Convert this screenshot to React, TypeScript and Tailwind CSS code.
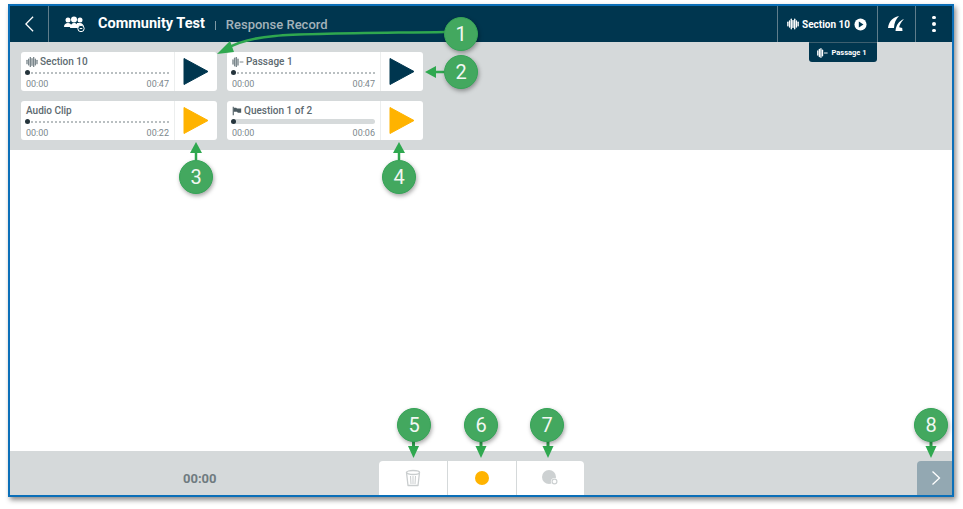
import React from "react";

const font = { fontFamily: "Roboto, 'Liberation Sans', sans-serif" };

function Wave({ className = "", color = "currentColor" }: { className?: string; color?: string }) {
  const bars = [[1, 3.5], [3, 2], [5, 0], [7, 1.5], [9, 0], [11, 2], [13, 3.5]];
  return (
    <svg viewBox="0 0 14 12" className={className}>
      {bars.map(([x, y]) => (
        <line key={x} x1={x} x2={x} y1={y + 0.5} y2={11.5 - y} stroke={color} strokeWidth="1.6" strokeLinecap="round" />
      ))}
    </svg>
  );
}

function PassageIcon({ className = "", color = "currentColor" }: { className?: string; color?: string }) {
  return (
    <svg viewBox="0 0 14 12" className={className}>
      {[[1, 3], [3, 1], [5, 0], [7, 2]].map(([x, y]) => (
        <line key={x} x1={x} x2={x} y1={y + 0.5} y2={11.5 - y} stroke={color} strokeWidth="1.7" strokeLinecap="round" />
      ))}
      <line x1="9" x2="13.5" y1="6" y2="6" stroke={color} strokeWidth="1.2" />
    </svg>
  );
}

function Flag({ className = "" }: { className?: string }) {
  return (
    <svg viewBox="0 0 12 12" className={className}>
      <path d="M1.5 1v10" stroke="#4b5a60" strokeWidth="1.3" />
      <path d="M2 2h3l1 1h5v5H7L6 7H2z" fill="#4b5a60" />
    </svg>
  );
}

function Tri({ color }: { color: string }) {
  return (
    <svg viewBox="0 0 26 29" className="w-[26px] h-[29px]">
      <path d="M1 1.5 25 14.5 1 27.5z" fill={color} stroke={color} strokeWidth="1" strokeLinejoin="round" />
    </svg>
  );
}

function Card({
  icon,
  title,
  end,
  solid,
  color,
}: {
  icon?: React.ReactNode;
  title: string;
  end: string;
  solid?: boolean;
  color: string;
}) {
  return (
    <div className="w-[196px] h-[39px] bg-white rounded-[3px] flex">
      <div className="w-[154px] pl-[5px] pr-[5px] pt-[3px] border-r border-[#eceeee]">
        <div className="flex items-center gap-[2px] h-[13px] text-[10px] font-medium text-[#5d6a70] leading-none">
          {icon}
          <span>{title}</span>
        </div>
        <div className="relative mt-[3px] h-[3px] flex items-center">
          {solid ? (
            <div className="w-full h-[5px] rounded-full bg-[#d6dadb]" />
          ) : (
            <div className="w-full h-[2px] border-t-2 border-dotted border-[#b9bfc1]" />
          )}
          <div className="absolute left-[-1px] top-[-1px] w-[5px] h-[5px] rounded-full bg-[#25343c]" />
        </div>
        <div className="flex justify-between mt-[5px] text-[9px] leading-[11px] text-[#7c888d]">
          <span>00:00</span>
          <span>{end}</span>
        </div>
      </div>
      <div className="flex-1 flex items-center justify-center pr-[1px]">
        <Tri color={color} />
      </div>
    </div>
  );
}

function Badge({ n, x, y }: { n: number; x: number; y: number }) {
  return (
    <div
      className="absolute w-[34px] h-[34px] rounded-full bg-[#43a85f] border border-[#35a457] shadow-[1px_2px_4px_rgba(0,0,0,0.35)] flex items-center justify-center text-[#f2f7f3] text-[20px] leading-none"
      style={{ left: x - 17, top: y - 17 }}
    >
      {n}
    </div>
  );
}

function Arrows() {
  const g = "#2fa84f";
  return (
    <svg className="absolute left-0 top-0 w-[963px] h-[509px] pointer-events-none" viewBox="0 0 963 509">
      <path d="M445 32C380 33 310 33 275 36 250 38 236 43 226 49" fill="none" stroke={g} strokeWidth="2.5" />
      <path d="M217 54 230 41 234 52z" fill={g} />
      <path d="M444 72H432" stroke={g} strokeWidth="2.5" />
      <path d="M425 72 436 66V78z" fill={g} />
      <path d="M196 160V150" stroke={g} strokeWidth="2.5" />
      <path d="M196 142 190 153H202z" fill={g} />
      <path d="M399 160V150" stroke={g} strokeWidth="2.5" />
      <path d="M399 142 393 153H405z" fill={g} />
      {[413.5, 481, 548, 931].map((x) => (
        <g key={x}>
          <path d={`M${x} 441V447`} stroke={g} strokeWidth="3" />
          <path d={`M${x} 458 ${x - 5.5} 446H${x + 5.5}z`} fill={g} />
        </g>
      ))}
    </svg>
  );
}

export default function App() {
  return (
    <div className="relative w-[963px] h-[509px] bg-white overflow-hidden pl-[8px] pt-[4px]" style={font}>
      <div className="w-[946px] h-[493px] border-2 border-[#0b6fb8] shadow-[2px_3px_5px_rgba(0,0,0,0.45)] bg-white flex flex-col">
        {/* Header */}
        <header className="relative h-[36px] shrink-0 bg-[#00364f] flex items-stretch text-white">
          <div className="w-[39px] border-r border-[#5f7d8b] flex items-center justify-center">
            <svg viewBox="0 0 12 20" className="w-[11px] h-[18px]">
              <path d="M10 2 2 10l8 8" fill="none" stroke="#fff" strokeWidth="1.4" />
            </svg>
          </div>
          <div className="ml-[15px] w-[21px] flex items-center">
            <svg viewBox="0 0 21 16" className="w-[21px] h-[16px]">
              <circle cx="4" cy="4" r="2.5" fill="#fff" />
              <circle cx="10" cy="3.5" r="3" fill="#fff" />
              <circle cx="16" cy="4" r="2.5" fill="#fff" />
              <path d="M0 11c0-3 2-4 4-4s3 1 3 2v2zM6 12c0-3 2-5 4-5s5 2 5 5zM13 7h3c2 0 4 2 4 4h-7z" fill="#fff" />
              <circle cx="17" cy="12.5" r="3.2" fill="#00364f" stroke="#fff" strokeWidth="1" />
              <path d="M15.7 12.5h2.6" stroke="#fff" strokeWidth="1" />
            </svg>
          </div>
          <div className="ml-[13px] flex items-center text-[14.5px] font-bold whitespace-nowrap">Community Test</div>
          <div className="ml-[10px] mt-[15px] w-px h-[9px] bg-[#7f99a5]" />
          <div className="ml-[10px] pt-[2px] flex items-center text-[13px] font-medium text-[#a3b2ba] whitespace-nowrap">
            Response Record
          </div>
          <div className="ml-auto flex items-stretch">
            <div className="relative w-[100px] border-l border-[#5f7d8b] flex items-center justify-center gap-[3px] pr-[1px]">
              <Wave className="w-[12px] h-[12px]" color="#fff" />
              <span className="text-[10px] font-bold whitespace-nowrap">Section 10</span>
              <svg viewBox="0 0 14 14" className="w-[13px] h-[13px] ml-[1px]">
                <circle cx="7" cy="7" r="6.5" fill="#fff" />
                <path d="M5.2 3.8 10.2 7l-5 3.2z" fill="#00364f" />
              </svg>
              <div className="absolute right-[0px] top-[36px] w-[68px] h-[20px] bg-[#00364f] rounded-b-[3px] border-t border-[#3d5f6f] flex items-center justify-center gap-[3px] pr-[2px]">
                <PassageIcon className="w-[11px] h-[10px]" color="#fff" />
                <span className="text-[7.5px] font-bold whitespace-nowrap">Passage 1</span>
              </div>
            </div>
            <div className="w-[38px] border-l border-[#5f7d8b] flex items-center justify-center">
              <svg viewBox="0 0 17 16" className="w-[17px] h-[16px]">
                <path d="M11 0C6 1 1 4 0 12h6C6 7 8 3 11 0z" fill="#fff" />
                <path d="M16 3C11 5 8 9 7.5 15h7l-.3-3-3-.7C11.5 9 13 6 16 3z" fill="#fff" />
              </svg>
            </div>
            <div className="w-[37px] border-l border-[#5f7d8b] flex flex-col items-center justify-center gap-[3px]">
              <div className="w-[3.5px] h-[3.5px] rounded-full bg-white" />
              <div className="w-[3.5px] h-[3.5px] rounded-full bg-white" />
              <div className="w-[3.5px] h-[3.5px] rounded-full bg-white" />
            </div>
          </div>
        </header>

        {/* Clip list */}
        <section className="h-[108px] shrink-0 bg-[#d5d9da] pl-[11px] pt-[10px] grid grid-cols-[196px_196px] grid-rows-[39px_39px] gap-x-[10px] gap-y-[10px]">
          <Card
            title="Section 10"
            end="00:47"
            color="#00364f"
            icon={<Wave className="w-[12px] h-[10px] text-[#7c888d]" />}
          />
          <Card
            title="Passage 1"
            end="00:47"
            color="#00364f"
            icon={<PassageIcon className="w-[12px] h-[10px] text-[#7c888d]" />}
          />
          <Card title="Audio Clip" end="00:22" color="#ffb300" />
          <Card
            title="Question 1 of 2"
            end="00:06"
            color="#ffb300"
            solid
            icon={<Flag className="w-[10px] h-[10px]" />}
          />
        </section>

        <div className="flex-1 bg-white" />

        {/* Bottom bar */}
        <footer className="relative h-[44px] shrink-0 bg-[#d5d9da] flex items-end">
          <div className="absolute left-[173px] top-[20px] text-[13px] font-bold leading-[15px] text-[#6f7b80]">00:00</div>
          <div className="ml-[369px] w-[205px] h-[34px] bg-white rounded-t-[4px] flex">
            <div className="w-[69px] border-r border-[#d5d9da] flex items-center justify-center">
              <svg viewBox="0 0 16 18" className="w-[16px] h-[18px]">
                <path d="M1.5 3.5h13L13 16.5H3z" fill="none" stroke="#c9cdce" strokeWidth="1.3" strokeLinejoin="round" />
                <ellipse cx="8" cy="3.5" rx="6.5" ry="2" fill="#fff" stroke="#c9cdce" strokeWidth="1.3" />
                <path d="M5.5 7l.5 8M8 7v8M10.5 7l-.5 8" stroke="#c9cdce" strokeWidth="1" />
              </svg>
            </div>
            <div className="w-[69px] border-r border-[#d5d9da] flex items-center justify-center">
              <div className="w-[14px] h-[14px] rounded-full bg-[#ffb300]" />
            </div>
            <div className="flex-1 flex items-center justify-center">
              <svg viewBox="0 0 17 16" className="w-[17px] h-[16px]">
                <circle cx="7" cy="7" r="7" fill="#cdd1d2" />
                <circle cx="12.5" cy="11.5" r="3.6" fill="#fff" />
                <circle cx="12.5" cy="11.5" r="2.4" fill="none" stroke="#cdd1d2" strokeWidth="1.2" />
              </svg>
            </div>
          </div>
          <div className="ml-auto w-[35px] h-[34px] bg-[#93a8b2] rounded-tl-[4px] flex items-center justify-center pl-[2px]">
            <svg viewBox="0 0 10 16" className="w-[10px] h-[16px]">
              <path d="M1.5 1.5 8.5 8l-7 6.5" fill="none" stroke="#fff" strokeWidth="1.3" />
            </svg>
          </div>
        </footer>
      </div>

      <Arrows />
      <Badge n={1} x={461} y={34} />
      <Badge n={2} x={461} y={72} />
      <Badge n={3} x={196} y={177} />
      <Badge n={4} x={399} y={177} />
      <Badge n={5} x={414} y={425} />
      <Badge n={6} x={481} y={425} />
      <Badge n={7} x={547} y={425} />
      <Badge n={8} x={931} y={425} />
    </div>
  );
}
